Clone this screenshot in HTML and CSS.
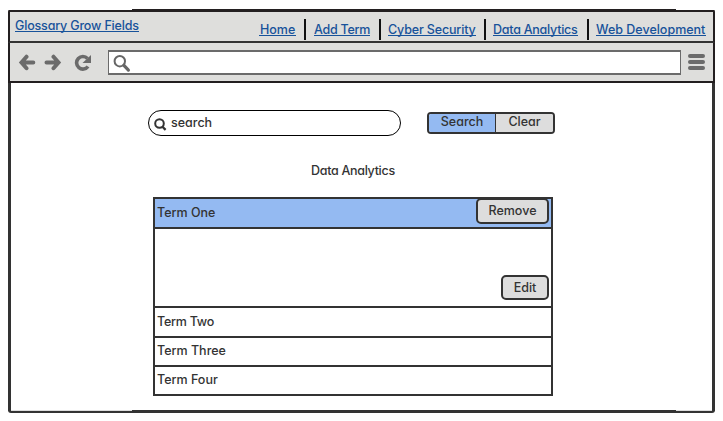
FILE: index.html
```html
<!DOCTYPE html>
<html lang="en">
<head>
<meta charset="utf-8">
<title>Glossary Grow Fields</title>
<link rel="stylesheet" href="styles.css">
</head>
<body>
<div class="window">
  <header class="titlebar">
    <a class="brand">Glossary Grow Fields</a>
    <nav class="nav">
      <a class="w-home">Home</a>
      <a class="w-add">Add Term</a>
      <a class="w-cyber">Cyber Security</a>
      <a class="w-data">Data Analytics</a>
      <a class="w-web">Web Development</a>
    </nav>
  </header>
  <div class="toolbar">
    <svg class="arrows" width="75" height="18" viewBox="0 0 75 18" fill="none" stroke="#6b6b6b">
      <path d="M8.500 3.700 3.500 9.500 8.500 15.200M4 9.500H15.300" stroke-width="4" stroke-linecap="round"/>
      <path d="M35.500 3.700 40.500 9.500 35.500 15.200M40 9.500H28.500" stroke-width="4" stroke-linecap="round"/>
      <path d="M69.500 5.500A6.300 6.300 0 1 0 70 13.500" stroke-width="3.6"/>
      <path d="M73 2v8h-8.500z" fill="#6b6b6b" stroke="none"/>
    </svg>
    <div class="address">
      <svg width="19" height="19" viewBox="0 0 19 19" fill="none" stroke="#666">
        <circle cx="6.800" cy="7.200" r="5.200" stroke-width="2"/>
        <path d="m10.900 11.400 4.500 4.700" stroke-width="3.200" stroke-linecap="round"/>
      </svg>
    </div>
    <div class="menu"><i></i><i></i><i></i></div>
  </div>
  <main class="page">
    <div class="controls">
      <div class="search">
        <svg width="13" height="13" viewBox="0 0 13 13" fill="none" stroke="#333">
          <circle cx="5.500" cy="5.500" r="4.300" stroke-width="2"/>
          <path d="m8.200 8.500 3.400 3.300" stroke-width="2.300"/>
        </svg>
        <span>search</span>
      </div>
      <div class="group"><button class="on">Search</button><button>Clear</button></div>
    </div>
    <h1>Data Analytics</h1>
    <div class="accordion">
      <div class="row selected"><span>Term One</span><button class="btn remove">Remove</button></div>
      <div class="body"><button class="btn edit">Edit</button></div>
      <div class="row two"><span>Term Two</span></div>
      <div class="row"><span>Term Three</span></div>
      <div class="row"><span>Term Four</span></div>
    </div>
  </main>
</div>
</body>
</html>
```
FILE: styles.css
```css
* { box-sizing: border-box; }
body {
  margin: 0;
  padding: 9px 8px 8px;
  background: #fff;
  font: 500 12.5px/16px Inter, "Liberation Sans", sans-serif;
  font-feature-settings: "cv11" 1;
  color: #333;
}
button { font: inherit; font-feature-settings: inherit; color: inherit; padding: 0; margin: 0; border: 0; background: #ddd; }
svg { display: block; flex: none; }
.window {
  width: 707px;
  height: 404px;
  border-radius: 3px;
  background:
    linear-gradient(#231f20, #231f20) 124px 0 / 544px 3px no-repeat,
    linear-gradient(#231f20, #231f20) 0 1px / 707px 2px no-repeat,
    linear-gradient(#333, #333) 124px 401px / 544px 3px no-repeat,
    linear-gradient(#333, #333) 0 402px / 707px 2px no-repeat,
    linear-gradient(#ddd, #ddd) 3px 401px / 701px 1px no-repeat,
    #fff;
  padding-top: 3px;
}
.titlebar, .toolbar {
  background: #dededc;
  border: solid #231f20;
  border-width: 0 2px 2px;
  display: flex;
}
.titlebar { height: 31px; padding-left: 5px; border-bottom-color: #333; justify-content: space-between; }
.titlebar a {
  display: block;
  color: #17529a;
  white-space: nowrap;
  height: 16px;
  line-height: 20px;
  border-bottom: 1px solid #17529a;
}
.titlebar .brand { width: 124px; margin-top: 4px; height: 16px; letter-spacing: -0.17px; }
.nav { display: flex; padding: 8px 7px 0 0; }
.nav a + a { margin-left: 18px; position: relative; }
.nav a + a::before {
  content: "";
  position: absolute;
  left: -9px;
  top: -1px;
  width: 2px;
  height: 21px;
  background: #111;
}
.nav a.w-add::before { left: -10px; }
.titlebar .w-home { width: 37px; text-indent: 1px; }
.w-add { width: 56px; letter-spacing: -0.25px; }
.w-cyber { width: 88px; letter-spacing: -0.15px; }
.nav .w-data { width: 85px; margin-left: 17px; letter-spacing: -0.25px; }
.w-web { width: 110px; }
.toolbar { height: 40px; align-items: flex-start; }
.arrows { margin: 10px 0 0 8px; }
.address {
  width: 573px;
  height: 25px;
  margin: 7px 0 0 15px;
  padding: 2px 4px;
  background: #fff;
  border: solid #6b6b6b;
  border-width: 2px 1px;
}
.menu { margin: 11px 0 0 7px; display: flex; flex-direction: column; gap: 2px; }
.menu i { width: 17px; height: 4px; border-radius: 2px; background: #6b6b6b; }
.page {
  height: 328px;
  border: solid #333;
  border-width: 0 3px;
  padding: 27px 0 0 137px;
}
.controls { display: flex; }
.search {
  width: 253px;
  height: 26px;
  border: 1px solid #000;
  border-radius: 13px;
  padding: 4px 0 0 5px;
  display: flex;
}
.search svg { margin: 3px 4px 0 0; }
.group {
  width: 128px;
  height: 22px;
  margin: 2px 0 0 26px;
  border: 2px solid #333;
  border-radius: 4px;
  display: flex;
  overflow: hidden;
  line-height: 16px;
}
.group button { flex: 1; padding-bottom: 2px; }
.group .on { flex: 0 0 67px; background: #94baf2; border-right: 1px solid #333; }
h1 { margin: 27px 0 0 163px; font: inherit; font-feature-settings: inherit; letter-spacing: -0.3px; }
.accordion { width: 400px; margin: 18px 0 0 5px; border: 2px solid #333; border-bottom: 0; }
.row { height: 29px; border-bottom: 2px solid #333; padding: 5px 2px 0; display: flex; justify-content: space-between; }
.selected { height: 30px; background: #94baf2; padding-top: 6px; }
.two { height: 30px; padding-top: 6px; letter-spacing: -0.25px; }
.body { height: 79px; border-bottom: 2px solid #333; display: flex; justify-content: flex-end; align-items: flex-end; padding: 0 2px 6px; }
.btn { border: 2px solid #333; border-radius: 5px; height: 26px; line-height: 20px; }
.remove { width: 73px; margin-top: -7px; }
.edit { width: 48px; height: 25px; }
```
